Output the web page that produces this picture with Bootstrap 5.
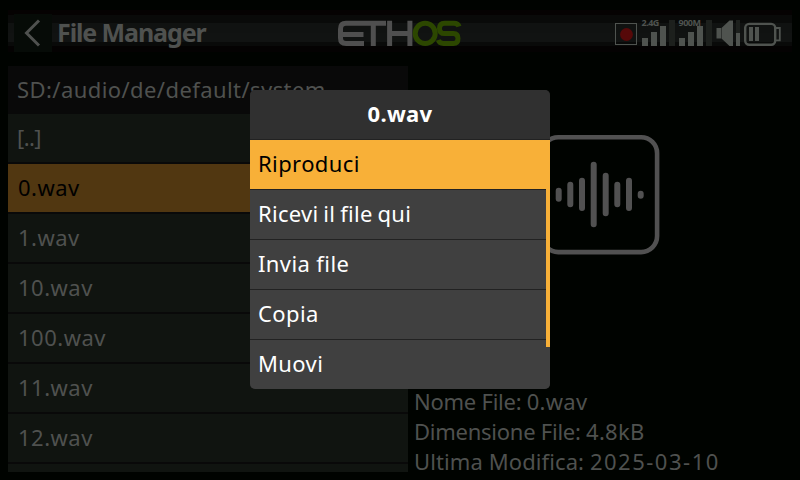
<!DOCTYPE html>
<html lang="it">
<head>
<meta charset="utf-8">
<meta name="viewport" content="width=device-width, initial-scale=1">
<title>File Manager</title>
<link href="https://cdn.jsdelivr.net/npm/bootstrap@5.3.0/dist/css/bootstrap.min.css" rel="stylesheet">
<script src="https://cdn.jsdelivr.net/npm/bootstrap@5.3.0/dist/js/bootstrap.bundle.min.js" defer></script>
<style>
  body { width: 800px; height: 480px; background: #000300; color: #4f514f; font: 22px/30px "Noto Sans", sans-serif; letter-spacing: .5px; }
  .topbar { height: 52px; margin: 8px 8px 6px; background: linear-gradient(#000300 0 2px, #050202 2px 7px, #090a09 7px 15px, #101211 15px 25px, #111312 25px 34px, #090a09 34px 38px, #040202 38px 44px, #000300 44px); }
  .back-btn { width: 38px; height: 38px; margin: 6px 0 0 6px; background: #060b07; border: 0; }
  .page-title { width: 159px; margin: 9px 0 0 5px; font: 700 25px/30px "Noto Sans", sans-serif; letter-spacing: -1.1px; }
  .logo { margin: 12px 0 0 122px; }
  .status { margin: 4px 10px 0 auto; }
  .status text { font: 700 9px "Noto Sans", sans-serif; letter-spacing: -.5px; }
  .listing { width: 400px; height: 406px; margin-left: 8px; background: #090909; row-gap: 2px; }
  .entry { height: 48px; flex: none; padding: 8px 9px 0 10px; background: #101410; }
  .entry.path { height: 46px; padding-left: 9px; background: #090909; letter-spacing: .42px; }
  .entry.parent { padding-left: 9px; letter-spacing: -.6px; }
  .entry.chosen { background: #513711; color: #000; }
  .details { width: 392px; height: 406px; padding-left: 6px; }
  .preview { margin: 69px 0 0 126px; }
  .facts { margin-top: 131px; letter-spacing: -.25px; }
  .facts .amount { letter-spacing: .25px; }
  .facts .label-date { letter-spacing: .1px; }
  .facts .date { letter-spacing: 1.5px; }
  .menu { left: 250px; top: 90px; width: 300px; height: 299px; border-radius: 5px; background: #222; color: #fff; row-gap: 1px; }
  .menu-head { height: 49px; padding-top: 8px; background: #303030; font-weight: 700; letter-spacing: .3px; }
  .menu-entry { height: 49px; padding: 8px 8px 0; background: #404040; letter-spacing: .4px; }
  .menu-entry.tight { letter-spacing: .3px; word-spacing: -1.2px; }
  .menu-entry.chosen { background: #f8b038; color: #000; }
  .menu-scroll { right: 0; top: 50px; width: 4px; height: 207px; background: #f8b038; }
</style>
</head>
<body class="overflow-hidden m-0 position-relative">
<header class="topbar d-flex align-items-start">
  <button class="back-btn p-0 d-block" aria-label="Indietro"><svg class="d-block" width="38" height="38" fill="none" stroke="#4f514f" stroke-width="3"><path d="M25 6.5 12.5 19 25 31.5"/></svg></button>
  <h1 class="page-title mb-0 text-nowrap">File Manager</h1>
  <svg class="logo" width="124" height="28" viewBox="338 20 124 28" fill="none" stroke-width="5" role="img" aria-label="ETHOS">
    <path stroke="#4f4f4f" d="M386 23.2H346Q340.5 23.2 340.5 29V38Q340.5 43.5 346 43.5H364M340.5 34.5H363.5M373.3 23V46M389.6 20.7V46M409.9 20.7V46M389.6 33.5H410"/>
    <ellipse cx="425.2" cy="33.4" rx="10" ry="10.2" stroke="#2c4700"/>
    <path stroke="#2c4700" d="M459 26.5Q458 23.2 454 23.2H444.5Q439.5 23.2 439.5 28.4 439.5 33.5 444.5 33.5H453.5Q458 33.5 458 38.5 458 43.5 453.5 43.5H443.5Q439.5 43.5 438.3 40"/>
  </svg>
  <svg class="status" width="168" height="36" viewBox="614 12 168 36" fill="#4f534f">
    <rect x="615.5" y="23.5" width="21" height="21" fill="none" stroke="#4f534f"/>
    <circle cx="626.5" cy="34.5" r="6.4" fill="#560909"/>
    <path d="M642 38h6v8h-6zM651 32h6v14h-6zM660 26h6v20h-6z"/>
    <path fill="#1d201d" d="M669 20h6v26h-6zM706 20h6v26h-6zM736 20h4v13h-4z"/>
    <text x="641.5" y="26.2">2.4G</text>
    <text x="678.5" y="26.2">900M</text>
    <path d="M679 38h6v8h-6zM688 32h6v14h-6zM697 26h6v20h-6z"/>
    <path d="M716.5 28H721V38.5H716.5zM721.5 28 729.5 20.5H733V46H729.5L721.5 38.5zM736 33h4v13h-4z"/>
    <rect x="745.2" y="23.9" width="30" height="20.8" rx="4" fill="none" stroke="#4f534f" stroke-width="2.4"/>
    <path d="M776 28H779.8V40.3H776" fill="none" stroke="#4f534f" stroke-width="1.8"/>
    <path d="M749 27h4v14h-4zM755 27h4v14h-4z"/>
  </svg>
</header>
<main class="d-flex">
  <div class="listing d-flex flex-column overflow-hidden">
    <div class="entry path text-nowrap">SD:/audio/de/default/system</div>
    <div class="entry parent">[..]</div>
    <div class="entry chosen">0.wav</div>
    <div class="entry">1.wav</div>
    <div class="entry">10.wav</div>
    <div class="entry">100.wav</div>
    <div class="entry">11.wav</div>
    <div class="entry">12.wav</div>
    <div class="entry"></div>
  </div>
  <section class="details">
    <svg class="preview d-block" width="120" height="120" viewBox="540 135 120 120" fill="none" stroke="#515151" stroke-linecap="round">
      <rect x="542.3" y="137.3" width="114.8" height="114.8" rx="16" stroke-width="4.6"/>
      <path stroke-width="6" d="M558.7 190.7V198.7M570.3 184.7V204.3M582 180.7V208M593.7 164.7V224.3M605.7 175.7V213.3M617.3 184.7V204.3M629 180.7V208M640.7 193.7V195.7"/>
    </svg>
    <div class="facts text-nowrap">
      <div>Nome File: <span class="amount">0.wav</span></div>
      <div>Dimensione File: <span class="amount">4.8kB</span></div>
      <div><span class="label-date">Ultima Modifica: </span><span class="date">2025-03-10</span></div>
    </div>
  </section>
</main>
<div class="menu position-absolute d-flex flex-column overflow-hidden">
  <div class="menu-head text-center">0.wav</div>
  <div class="menu-entry chosen">Riproduci</div>
  <div class="menu-entry tight">Ricevi il file qui</div>
  <div class="menu-entry">Invia file</div>
  <div class="menu-entry">Copia</div>
  <div class="menu-entry">Muovi</div>
  <div class="menu-scroll position-absolute"></div>
</div>
</body>
</html>
